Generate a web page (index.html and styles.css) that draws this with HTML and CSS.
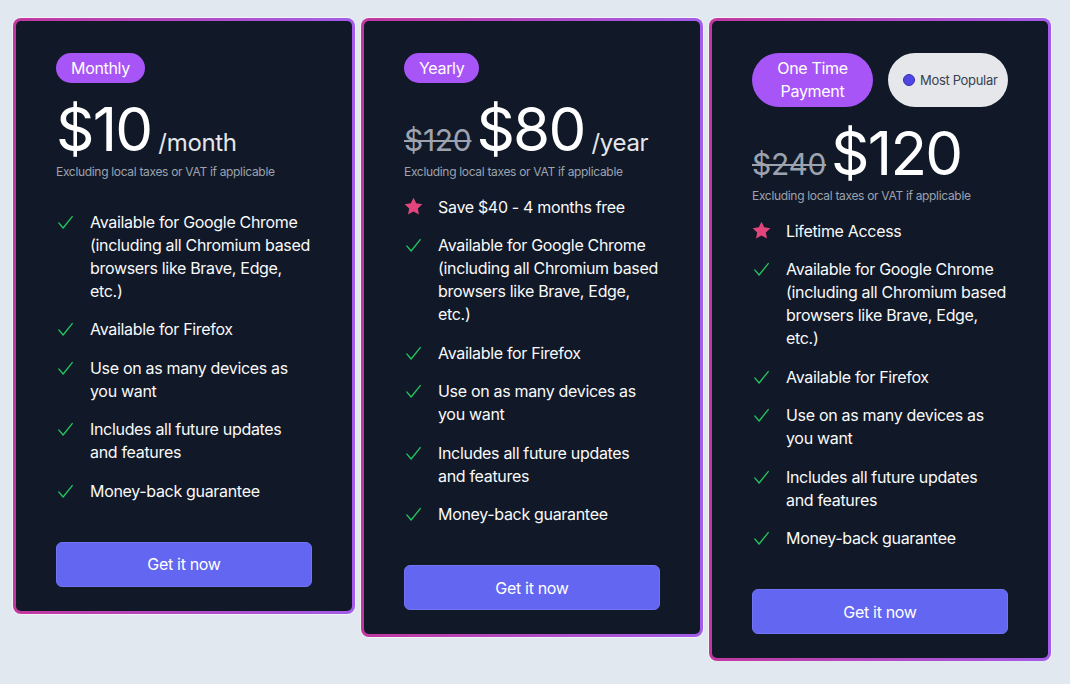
FILE: index.html
```html
<!DOCTYPE html>
<html lang="en">
<head>
<meta charset="utf-8">
<title>Pricing</title>
<link rel="stylesheet" href="styles.css">
</head>
<body>
<main class="plans">
  <section class="card">
    <div class="card-inner">
      <div class="badges"><span class="badge">Monthly</span></div>
      <div class="price-row">
        <span class="price">$10</span><span class="per">/month</span>
      </div>
      <p class="note">Excluding local taxes or VAT if applicable</p>
      <ul class="features features-spaced">
        <li class="feature"><svg class="check" viewBox="0 0 24 24"><path d="M3.5 12.5l5.5 6.5 11.5-14.5"/></svg><span>Available for Google Chrome (including all Chromium based browsers like Brave, Edge, etc.)</span></li>
        <li class="feature"><svg class="check" viewBox="0 0 24 24"><path d="M3.5 12.5l5.5 6.5 11.5-14.5"/></svg><span>Available for Firefox</span></li>
        <li class="feature"><svg class="check" viewBox="0 0 24 24"><path d="M3.5 12.5l5.5 6.5 11.5-14.5"/></svg><span>Use on as many devices as you want</span></li>
        <li class="feature"><svg class="check" viewBox="0 0 24 24"><path d="M3.5 12.5l5.5 6.5 11.5-14.5"/></svg><span>Includes all future updates and features</span></li>
        <li class="feature"><svg class="check" viewBox="0 0 24 24"><path d="M3.5 12.5l5.5 6.5 11.5-14.5"/></svg><span>Money-back guarantee</span></li>
      </ul>
      <button class="cta">Get it now</button>
    </div>
  </section>

  <section class="card">
    <div class="card-inner">
      <div class="badges"><span class="badge">Yearly</span></div>
      <div class="price-row">
        <span class="old">$120</span><span class="price">$80</span><span class="per">/year</span>
      </div>
      <p class="note">Excluding local taxes or VAT if applicable</p>
      <ul class="features">
        <li class="feature"><svg class="star" viewBox="0 0 20 20"><path d="M10 1.6l2.55 5.4 5.9.75-4.35 4.05 1.12 5.85L10 14.75 4.78 17.65 5.9 11.8 1.55 7.75l5.9-.75z"/></svg><span>Save $40 - 4 months free</span></li>
        <li class="feature"><svg class="check" viewBox="0 0 24 24"><path d="M3.5 12.5l5.5 6.5 11.5-14.5"/></svg><span>Available for Google Chrome (including all Chromium based browsers like Brave, Edge, etc.)</span></li>
        <li class="feature"><svg class="check" viewBox="0 0 24 24"><path d="M3.5 12.5l5.5 6.5 11.5-14.5"/></svg><span>Available for Firefox</span></li>
        <li class="feature"><svg class="check" viewBox="0 0 24 24"><path d="M3.5 12.5l5.5 6.5 11.5-14.5"/></svg><span>Use on as many devices as you want</span></li>
        <li class="feature"><svg class="check" viewBox="0 0 24 24"><path d="M3.5 12.5l5.5 6.5 11.5-14.5"/></svg><span>Includes all future updates and features</span></li>
        <li class="feature"><svg class="check" viewBox="0 0 24 24"><path d="M3.5 12.5l5.5 6.5 11.5-14.5"/></svg><span>Money-back guarantee</span></li>
      </ul>
      <button class="cta">Get it now</button>
    </div>
  </section>

  <section class="card">
    <div class="card-inner">
      <div class="badges">
        <span class="badge badge-wrap">One Time Payment</span>
        <span class="popular"><span class="dot"></span>Most Popular</span>
      </div>
      <div class="price-row">
        <span class="old">$240</span><span class="price">$120</span>
      </div>
      <p class="note">Excluding local taxes or VAT if applicable</p>
      <ul class="features">
        <li class="feature"><svg class="star" viewBox="0 0 20 20"><path d="M10 1.6l2.55 5.4 5.9.75-4.35 4.05 1.12 5.85L10 14.75 4.78 17.65 5.9 11.8 1.55 7.75l5.9-.75z"/></svg><span>Lifetime Access</span></li>
        <li class="feature"><svg class="check" viewBox="0 0 24 24"><path d="M3.5 12.5l5.5 6.5 11.5-14.5"/></svg><span>Available for Google Chrome (including all Chromium based browsers like Brave, Edge, etc.)</span></li>
        <li class="feature"><svg class="check" viewBox="0 0 24 24"><path d="M3.5 12.5l5.5 6.5 11.5-14.5"/></svg><span>Available for Firefox</span></li>
        <li class="feature"><svg class="check" viewBox="0 0 24 24"><path d="M3.5 12.5l5.5 6.5 11.5-14.5"/></svg><span>Use on as many devices as you want</span></li>
        <li class="feature"><svg class="check" viewBox="0 0 24 24"><path d="M3.5 12.5l5.5 6.5 11.5-14.5"/></svg><span>Includes all future updates and features</span></li>
        <li class="feature"><svg class="check" viewBox="0 0 24 24"><path d="M3.5 12.5l5.5 6.5 11.5-14.5"/></svg><span>Money-back guarantee</span></li>
      </ul>
      <button class="cta">Get it now</button>
    </div>
  </section>
</main>
</body>
</html>
```
FILE: styles.css
```css
* { box-sizing: border-box; }

html, body {
  margin: 0;
  padding: 0;
  background: #e2e8f0;
  font-family: Inter, "Noto Sans", "Liberation Sans", sans-serif;
  letter-spacing: -0.02em;
  color: #f3f4f6;
}

.plans {
  display: flex;
  align-items: flex-start;
  gap: 6px;
  padding: 18px 0 0 13px;
}

.card {
  width: 342px;
  flex: none;
  padding: 3px;
  border-radius: 8px;
  background: linear-gradient(to right, #c2389f, #a35de9);
  box-shadow: 0 0 0 1px rgba(255, 255, 255, 0.55);
}

.card-inner {
  background: #111827;
  border-radius: 5px;
  padding: 32px 40px 24px;
  display: flex;
  flex-direction: column;
}

.badges {
  display: flex;
  align-items: stretch;
  gap: 15px;
}

.badge {
  background: #a855f7;
  color: #fff;
  font-size: 16px;
  line-height: 23px;
  padding: 3.5px 15px;
  border-radius: 999px;
  text-align: center;
}

.badge-wrap {
  width: 121px;
  padding: 4px 12px;
}

.popular {
  display: flex;
  align-items: center;
  gap: 5px;
  background: #e5e7eb;
  color: #374151;
  font-size: 13px;
  white-space: nowrap;
  padding: 0 12px 0 15px;
  border-radius: 999px;
  width: 120px;
}

.dot {
  width: 12px;
  height: 12px;
  border-radius: 50%;
  background: #4f46e5;
  border: 1px solid #3730a3;
  flex: none;
}

.price-row {
  display: flex;
  align-items: baseline;
  margin-top: 16px;
  line-height: 1;
}

.price {
  font-size: 60px;
  color: #fff;
  line-height: 60px;
  letter-spacing: -0.03em;
}

.old {
  font-size: 30px;
  color: #9ca3af;
  text-decoration: line-through;
  text-decoration-thickness: 2px;
  margin-right: 5px;
}

.per {
  font-size: 24px;
  color: #e5e7eb;
  margin-left: 7px;
}

.note {
  margin: 5px 0 0;
  font-size: 12px;
  line-height: 16px;
  color: #9ca3af;
}

.features {
  list-style: none;
  margin: 15.5px 0 0;
  padding: 0;
  display: flex;
  flex-direction: column;
  gap: 15.5px;
}

.features-spaced {
  margin-top: 30.5px;
}

.feature {
  display: flex;
  align-items: flex-start;
  gap: 15px;
  font-size: 16px;
  line-height: 23px;
  color: #f9fafb;
}

.check {
  width: 19px;
  height: 19px;
  flex: none;
  margin-top: 2px;
  fill: none;
  stroke: #22c55e;
  stroke-width: 1.7;
  stroke-linecap: round;
  stroke-linejoin: round;
}

.star {
  width: 21px;
  height: 21px;
  flex: none;
  margin-top: 0;
  margin-left: -1px;
  margin-right: -1px;
  fill: #e1457b;
}

.cta {
  margin-top: 39px;
  height: 45px;
  width: 100%;
  background: #6366f1;
  border: 1px solid #7174f3;
  border-radius: 6px;
  color: #fff;
  font-family: inherit;
  letter-spacing: inherit;
  font-size: 16px;
  cursor: pointer;
}
```
